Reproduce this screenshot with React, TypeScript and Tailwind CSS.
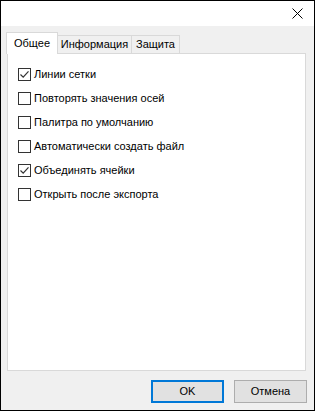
const options = [
  { label: "Линии сетки", checked: true },
  { label: "Повторять значения осей", checked: false },
  { label: "Палитра по умолчанию", checked: false },
  { label: "Автоматически создать файл", checked: false },
  { label: "Объединять ячейки", checked: true },
  { label: "Открыть после экспорта", checked: false },
];

function CheckBox({ checked }: { checked: boolean }) {
  return (
    <span className="w-[13px] h-[13px] border border-[#333333] bg-white flex items-center justify-center shrink-0">
      {checked && (
        <svg width="11" height="11" viewBox="0 0 11 11" fill="none">
          <path d="M1.5 5.5 L4.2 8.2 L9.5 2.3" stroke="#333333" strokeWidth="1.2" />
        </svg>
      )}
    </span>
  );
}

export default function App() {
  return (
    <div
      className="w-[315px] h-[411px] border border-black flex flex-col text-[11px] text-black"
      style={{ fontFamily: '"Liberation Sans", Arial, sans-serif' }}
    >
      {/* Title bar */}
      <div className="h-[25px] bg-white flex items-center justify-end pr-[11px]">
        <svg width="11" height="11" viewBox="0 0 11 11">
          <path d="M0.5 0.5 L10.5 10.5 M10.5 0.5 L0.5 10.5" stroke="#000" strokeWidth="1" />
        </svg>
      </div>

      {/* Body */}
      <div className="flex-1 bg-[#f0f0f0] pt-[6px] pl-[6px] pr-[8px] flex flex-col">
        {/* Tabs */}
        <div className="h-[21px] flex items-end -ml-px">
          <div className="relative z-10 w-[52px] h-[22px] -mb-px bg-white border border-b-0 border-[#d9d9d9] flex items-center justify-center pb-[1px]">
            Общее
          </div>
          <div className="w-[75px] h-[18px] -ml-px bg-[#f0f0f0] border border-b-0 border-[#d9d9d9] flex items-center justify-center">
            Информация
          </div>
          <div className="w-[49px] h-[18px] -ml-px bg-[#f0f0f0] border border-b-0 border-[#d9d9d9] flex items-center justify-center">
            Защита
          </div>
        </div>

        {/* Panel */}
        <div className="h-[318px] bg-white border border-[#d9d9d9] pt-[14px] pl-[10px] flex flex-col gap-[11px]">
          {options.map((o) => (
            <label key={o.label} className="h-[13px] flex items-center gap-[3px]">
              <CheckBox checked={o.checked} />
              <span className="leading-none">{o.label}</span>
            </label>
          ))}
        </div>

        {/* Buttons */}
        <div className="mt-[9px] flex justify-end gap-[10px] -mr-[1px]">
          <button className="w-[73px] h-[23px] bg-[#e1e1e1] border-2 border-[#0078d7]">OK</button>
          <button className="w-[73px] h-[23px] bg-[#e1e1e1] border border-[#adadad]">Отмена</button>
        </div>
      </div>
    </div>
  );
}
